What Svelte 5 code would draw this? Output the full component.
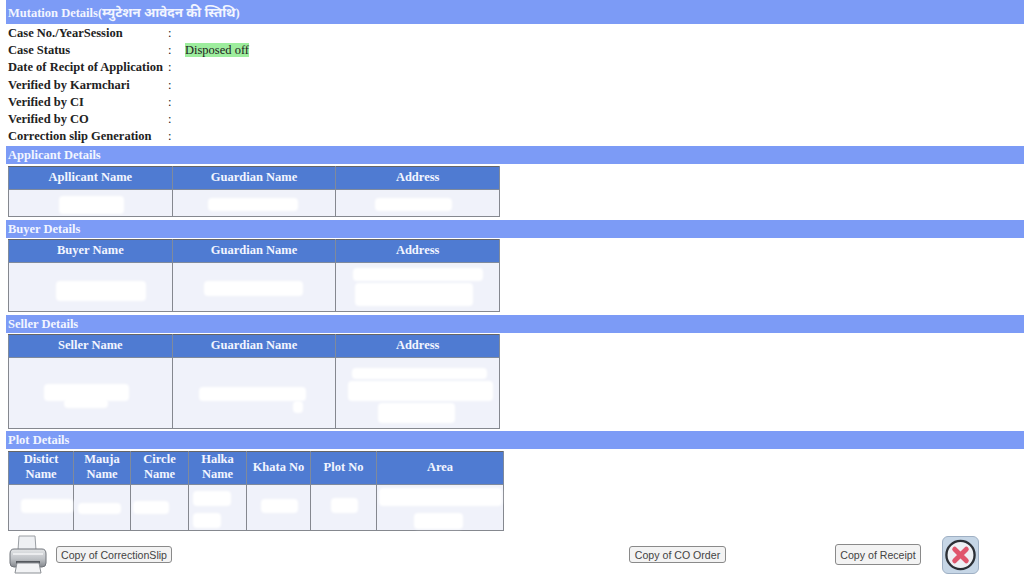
<script>
  const statusRows = [
    ["Case No./YearSession", ""],
    ["Case Status", "Disposed off"],
    ["Date of Recipt of Application", ""],
    ["Verified by Karmchari", ""],
    ["Verified by CI", ""],
    ["Verified by CO", ""],
    ["Correction slip Generation", ""],
  ];

  // blobs are the white smudges over the hidden values: [left, top, width, height]
  const sections = [
    {
      title: "Applicant Details", barGap: 0, tableGap: 2, bodyH: 26,
      heads: ["Apllicant Name", "Guardian Name", "Address"],
      blobs: [[[50, 6, 65, 18]], [[35, 8, 90, 13]], [[39, 8, 77, 13]]],
    },
    {
      title: "Buyer Details", barGap: 3, tableGap: 1, bodyH: 48,
      heads: ["Buyer Name", "Guardian Name", "Address"],
      blobs: [
        [[47, 18, 90, 20]],
        [[31, 18, 99, 15]],
        [[17, 5, 130, 13], [19, 20, 118, 23]],
      ],
    },
    {
      title: "Seller Details", barGap: 3, tableGap: 1, bodyH: 70,
      heads: ["Seller Name", "Guardian Name", "Address"],
      blobs: [
        [[35, 26, 85, 17], [55, 41, 44, 9]],
        [[26, 29, 107, 14], [120, 43, 10, 12]],
        [[16, 10, 135, 11], [12, 23, 145, 20], [42, 45, 77, 20]],
      ],
    },
  ];

  const plotHeads = [
    ["Distict", "Name"], ["Mauja", "Name"], ["Circle", "Name"], ["Halka", "Name"],
    ["Khata No"], ["Plot No"], ["Area"],
  ];
  const plotWidths = [64, 56, 57, 57, 63, 65, 126];
  const plotBlobs = [
    [[12, 14, 52, 14]],
    [[4, 18, 43, 11]],
    [[2, 16, 36, 13]],
    [[4, 6, 38, 15], [4, 28, 28, 15]],
    [[14, 14, 37, 14]],
    [[20, 13, 27, 15]],
    [[2, 3, 123, 18], [37, 28, 49, 16]],
  ];
</script>

{#snippet blobList(list)}
  {#each list as b}
    <span class="blob" style="left:{b[0]}px;top:{b[1]}px;width:{b[2]}px;height:{b[3]}px"></span>
  {/each}
{/snippet}

<main>
  <div class="bar first">Mutation Details(<span class="hi">म्युटेशन आवेदन की स्तिथि</span>)</div>

  <div class="status">
    {#each statusRows as row}
      <div class="label">{row[0]}</div>
      <div class="colon">:</div>
      <div class="value">
        {#if row[1]}<span class="badge">{row[1]}</span>{/if}
      </div>
    {/each}
  </div>

  {#each sections as s}
    <div class="bar" style="margin-top:{s.barGap}px">{s.title}</div>
    <table class="three" style="margin-top:{s.tableGap}px">
      <thead>
        <tr>
          {#each s.heads as h}<th>{h}</th>{/each}
        </tr>
      </thead>
      <tbody>
        <tr>
          {#each s.blobs as list}
            <td style="height:{s.bodyH}px">
              {@render blobList(list)}
            </td>
          {/each}
        </tr>
      </tbody>
    </table>
  {/each}

  <div class="bar">Plot Details</div>
  <table class="plot">
    <thead>
      <tr>
        {#each plotHeads as h, i}
          <th style="width:{plotWidths[i]}px">
            {#each h as line, j}{#if j}<br />{/if}{line}{/each}
          </th>
        {/each}
      </tr>
    </thead>
    <tbody>
      <tr>
        {#each plotBlobs as list}
          <td>
            {@render blobList(list)}
          </td>
        {/each}
      </tr>
    </tbody>
  </table>

  <div class="actions">
    <svg class="printer" viewBox="0 0 40 40" width="40" height="40">
      <defs>
        <linearGradient id="body" x1="0" y1="0" x2="0" y2="1">
          <stop offset="0" stop-color="#e4e6e8" />
          <stop offset="0.55" stop-color="#bfc2c6" />
          <stop offset="1" stop-color="#84888d" />
        </linearGradient>
      </defs>
      <path d="M11 1h16l1 14H10z" fill="#eef0f3" stroke="#9a9ea3" />
      <path d="M6 14h28q4 0 4 5v9q0 4-4 4H6q-4 0-4-4v-9q0-5 4-5z" fill="url(#body)" stroke="#70747a" />
      <path d="M5 19h30" stroke="#f4f5f6" stroke-width="1.5" />
      <path d="M8 26h24v3H8z" fill="#55595e" />
      <path d="M9 28h22l2 10H7z" fill="#f2f3f5" stroke="#8c9095" />
    </svg>
    <button class="slip">Copy of CorrectionSlip</button>
    <button class="order">Copy of CO Order</button>
    <button class="receipt">Copy of Receipt</button>
    <div class="close">
      <svg viewBox="0 0 36 36" width="37" height="38">
        <circle cx="18" cy="18" r="14.5" fill="#eef0f4" stroke="#2c3036" stroke-width="2.4" />
        <path d="M12 12l12 12M24 12L12 24" stroke="#e0566c" stroke-width="5" stroke-linecap="round" />
      </svg>
    </div>
  </div>
</main>

<style>
  :global(body) {
    background: #fff;
  }

  main {
    height: 578px;
    overflow: hidden;
    padding-left: 6px;
    font-family: "Liberation Serif", "Noto Sans", serif;
    font-size: 12.5px;
    font-weight: bold;
    color: #222;
  }

  .bar {
    height: 18px;
    line-height: 18px;
    padding-left: 2px;
    margin-top: 2px;
    background: #7c9bf6;
    color: #f2f5ff;
  }

  .first {
    height: 24px;
    line-height: 25px;
    margin-top: 0;
  }

  .hi {
    font-size: 13.3px;
  }

  .status {
    display: grid;
    grid-template-columns: 160px 17px 1fr;
    grid-auto-rows: 17.2px;
    line-height: 17px;
    padding: 1px 0 0 2px;
    height: 121px;
  }

  .colon {
    font-weight: normal;
  }

  .value {
    font-weight: normal;
  }

  .badge {
    display: inline-block;
    height: 14px;
    line-height: 14px;
    background: #9ded9d;
  }

  table {
    border-collapse: collapse;
    table-layout: fixed;
    margin-left: 2px;
  }

  .three {
    width: 492px;
  }

  .plot {
    width: 495px;
    margin-top: 2px;
  }

  th {
    background: #4f7bd2;
    color: #f2f5ff;
    border: 1px solid #7f8a9c;
    border-top-color: #666;
    height: 20px;
    padding: 0 0 2px;
    line-height: 15px;
    text-align: center;
  }

  .plot th {
    height: 29px;
  }

  td {
    position: relative;
    background: #f0f2fa;
    border: 1px solid #85888f;
    padding: 0;
  }

  .plot td {
    height: 45px;
  }

  .blob {
    position: absolute;
    background: #fff;
    border-radius: 4px;
    filter: blur(1px);
  }

  .actions {
    display: flex;
    align-items: center;
    height: 41px;
    margin-top: 3px;
    padding-left: 2px;
  }

  .printer {
    flex: none;
  }

  button {
    flex: none;
    height: 17px;
    padding: 0;
    font-family: "Liberation Sans", Arial, sans-serif;
    font-size: 10.6px;
    color: #444;
    background: #f3f3f3;
    border: 1px solid #8a8a8a;
    border-radius: 3px;
  }

  .slip {
    width: 116px;
    margin-left: 8px;
  }

  .order {
    width: 97px;
    margin-left: 457px;
  }

  .receipt {
    width: 86px;
    height: 21px;
    margin-left: 109px;
  }

  .close {
    flex: none;
    width: 37px;
    height: 38px;
    margin-left: 21px;
    border: 1px solid #9fb0c4;
    border-radius: 6px;
    box-sizing: border-box;
    background: #c6d6e6;
    display: flex;
    align-items: center;
    justify-content: center;
  }
</style>
